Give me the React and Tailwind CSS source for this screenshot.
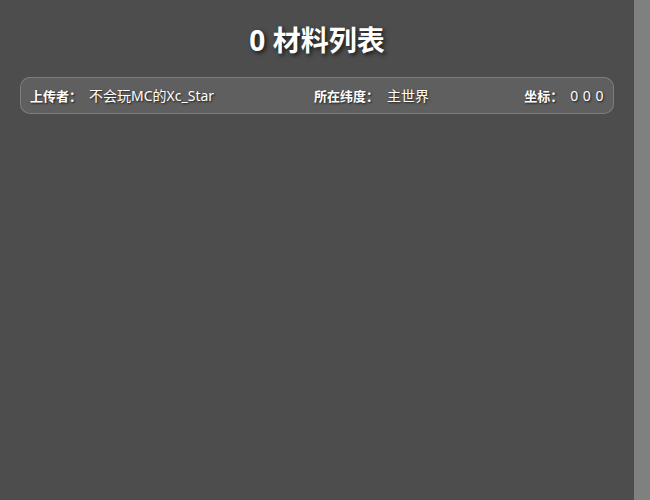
export default function App() {
    const font = { fontFamily: '"Noto Sans", "Noto Sans CJK SC", sans-serif' };
    return (
        <div className="flex h-[500px] w-[650px] overflow-hidden bg-[#4d4d4d] text-white" style={font}>
            <div className="flex-1 px-5 pt-[19px]">
                {/* Title */}
                <h1 className="text-center text-[28px] font-bold leading-[42px] [text-shadow:2px_2px_4px_rgba(0,0,0,0.7)]">
                    0 材料列表
                </h1>

                {/* Info bar */}
                <div className="mt-[16px] flex h-[37px] items-center rounded-[10px] border border-white/20 bg-white/10 px-[9px] text-[13px] [text-shadow:1px_1px_2px_rgba(0,0,0,0.7)]">
                    <div className="w-[283px]">
                        <span className="font-bold">上传者：</span>
                        <span className="ml-[7px] text-[14px]">不会玩MC的Xc_Star</span>
                    </div>
                    <div className="flex-1">
                        <span className="ml-px font-bold">所在纬度：</span>
                        <span className="ml-[8px] text-[14px]">主世界</span>
                    </div>
                    <div>
                        <span className="font-bold">坐标：</span>
                        <span className="ml-[7px] text-[14px] tracking-[0.5px]">0 0 0</span>
                    </div>
                </div>
            </div>

            {/* Scrollbar strip */}
            <div className="w-[16px] bg-[#808080]" />
        </div>
    );
}
